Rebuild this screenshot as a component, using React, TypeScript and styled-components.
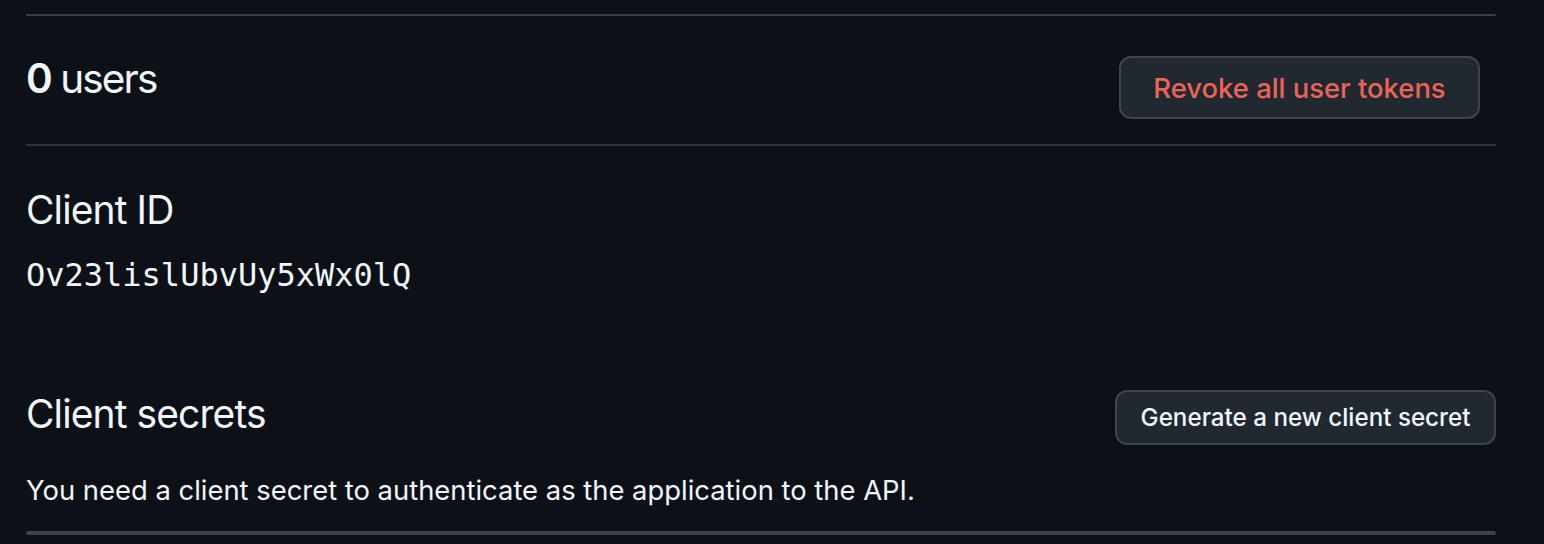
import React from "react";
import styled, { createGlobalStyle } from "styled-components";

const Global = createGlobalStyle`
  html, body {
    margin: 0;
    padding: 0;
    background: #0d1117;
  }
  body {
    font-family: Inter, "Noto Sans", sans-serif;
    color: #f0f6fc;
  }
`;

const Page = styled.div`
  width: 1470px;
  padding: 14px 0 0 26px;
  display: flex;
  flex-direction: column;
`;

const Divider = styled.div<{ $thick?: number; $color?: string; $mt?: number }>`
  height: ${(p) => p.$thick ?? 2}px;
  margin-top: ${(p) => p.$mt ?? 0}px;
  background: ${(p) => p.$color ?? "#30363d"};
  border-radius: 2px;
`;

const Row = styled.div<{ $pt: number; $pb: number }>`
  display: flex;
  justify-content: space-between;
  align-items: flex-start;
  padding: ${(p) => p.$pt}px 0 ${(p) => p.$pb}px 0;
`;

const Heading = styled.h2<{ $size: number; $mt?: number; $ls?: number }>`
  margin: ${(p) => p.$mt ?? 0}px 0 0 0;
  font-size: ${(p) => p.$size}px;
  line-height: 1;
  font-weight: 400;
  letter-spacing: ${(p) => p.$ls ?? -0.9}px;
  color: #f0f6fc;
  b {
    font-weight: 600;
  }
`;

const Button = styled.button<{ $danger?: boolean; $h: number; $w: number; $fs: number; $mr?: number }>`
  height: ${(p) => p.$h}px;
  width: ${(p) => p.$w}px;
  margin-right: ${(p) => p.$mr ?? 0}px;
  box-sizing: border-box;
  border: 2px solid #3d444d;
  border-radius: 12px;
  background: #212830;
  color: ${(p) => (p.$danger ? "#e9645a" : "#f0f6fc")};
  font-family: Inter, "Noto Sans", sans-serif;
  font-size: ${(p) => p.$fs}px;
  font-weight: 500;
  display: flex;
  align-items: center;
  justify-content: center;
  padding: 0;
  cursor: pointer;
`;

const Mono = styled.div`
  font-family: "DejaVu Sans Mono", "Liberation Mono", monospace;
  font-size: 32px;
  line-height: 1;
  margin-top: 30px;
  color: #f0f6fc;
`;

const Text = styled.p`
  margin: 32px 0 0 0;
  font-size: 27.4px;
  line-height: 1;
  color: #f0f6fc;
`;

export default function App() {
  return (
    <>
      <Global />
      <Page>
        <Divider $thick={2} $color="#3a3f47" />
        <Row $pt={40} $pb={25}>
          <Heading $size={40.5} $mt={3} $ls={-1.9}>
            <b>0</b> users
          </Heading>
          <Button $danger $h={63} $w={361} $fs={27.4} $mr={16}>
            Revoke all user tokens
          </Button>
        </Row>
        <Divider $thick={2} />
        <Heading $size={39} $mt={44}>
          Client ID
        </Heading>
        <Mono>Ov23lislUbvUy5xWx0lQ</Mono>
        <Row $pt={99} $pb={0}>
          <Heading $size={39} $mt={4}>
            Client secrets
          </Heading>
          <Button $h={55} $w={381} $fs={24.2}>
            Generate a new client secret
          </Button>
        </Row>
        <Text>You need a client secret to authenticate as the application to the API.</Text>
        <Divider $thick={4} $color="#3d434b" $mt={27} />
      </Page>
    </>
  );
}
